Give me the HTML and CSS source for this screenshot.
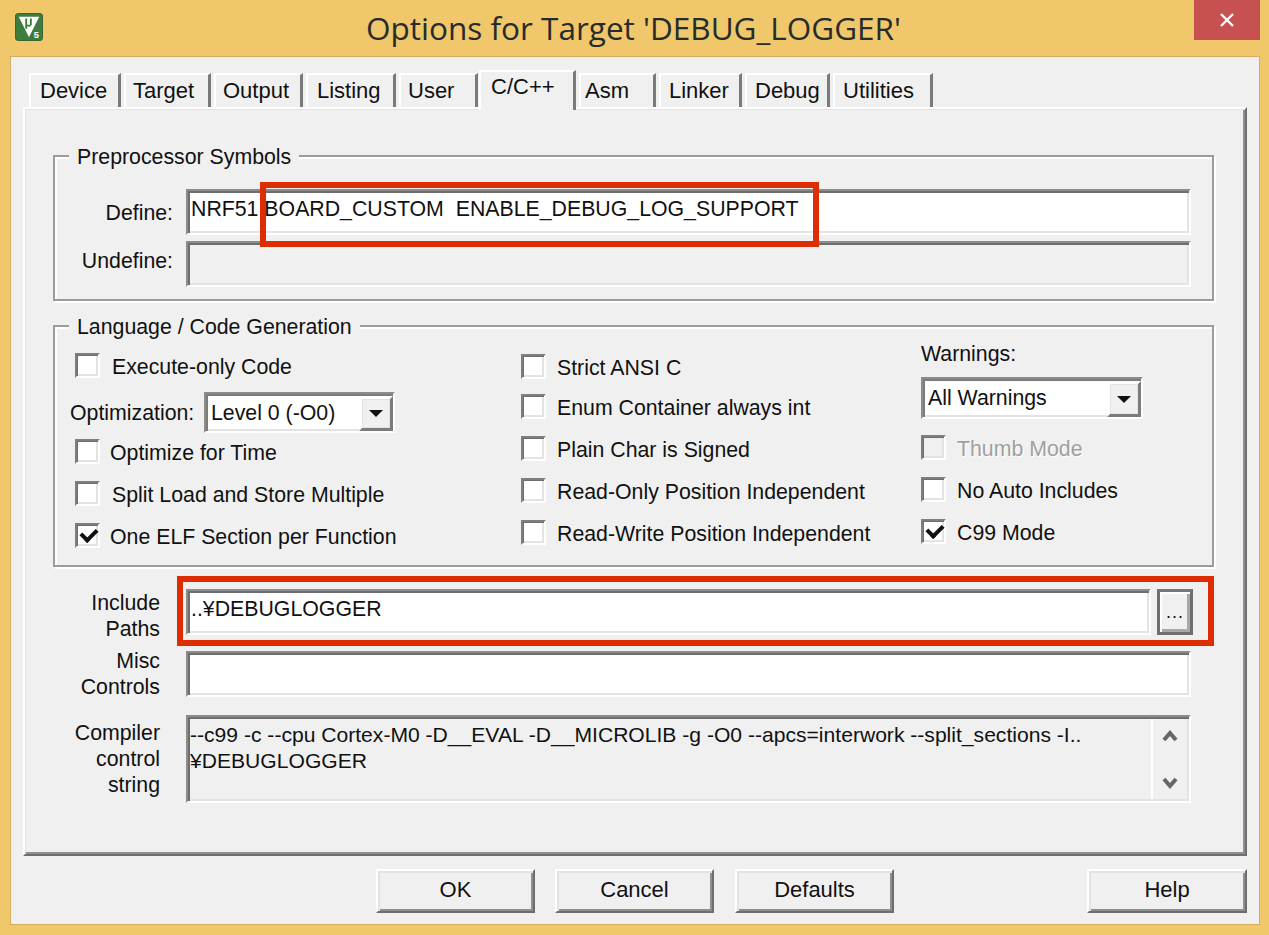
FILE: index.html
```html
<!DOCTYPE html>
<html lang="en">
<head>
    <meta charset="UTF-8">
    <title>Options for Target 'DEBUG_LOGGER'</title>
    <link rel="stylesheet" href="styles.css">
</head>
<body>

<div class="window">
    <div class="titlebar">
        <svg class="app-icon" width="28" height="28" viewBox="0 0 30 30">
            <rect x="0.5" y="0.5" width="29" height="29" rx="3" fill="#3c7d3e" stroke="#2c5f30"/>
            <polygon points="4,4 26,4 15,26" fill="#fff"/>
            <polygon points="20,17 29,17 29,28 14,28" fill="#3c7d3e"/>
            <text x="20" y="27" class="icon-five">5</text>
            <path d="M12 6 V17 M12 13.5 H17 M17 6 V13" stroke="#3c7d3e" stroke-width="2" fill="none"/>
        </svg>
        <div class="title">Options for Target 'DEBUG_LOGGER'</div>
        <div class="close">
            <svg width="14" height="14" viewBox="0 0 14 14">
                <path d="M1 1 L13 13 M13 1 L1 13" stroke="#fff" stroke-width="2.4"/>
            </svg>
        </div>
    </div>

    <div class="client">
        <div class="tabs">
            <div class="tab tab-device">Device</div>
            <div class="tab tab-target">Target</div>
            <div class="tab tab-output">Output</div>
            <div class="tab tab-listing">Listing</div>
            <div class="tab tab-user">User</div>
            <div class="tab tab-active">C/C++</div>
            <div class="tab tab-asm">Asm</div>
            <div class="tab tab-linker">Linker</div>
            <div class="tab tab-debug">Debug</div>
            <div class="tab tab-utilities">Utilities</div>
        </div>

        <div class="panel">
            <div class="group group-symbols">
                <div class="group-title">Preprocessor Symbols</div>
                <div class="symbol-row">
                    <label class="symbol-label">Define:</label>
                    <div class="field field-define">NRF51 BOARD_CUSTOM  ENABLE_DEBUG_LOG_SUPPORT</div>
                </div>
                <div class="symbol-row">
                    <label class="symbol-label symbol-label-high">Undefine:</label>
                    <div class="field field-define field-disabled"></div>
                </div>
                <div class="highlight highlight-define"></div>
            </div>

            <div class="group group-language">
                <div class="group-title">Language / Code Generation</div>
                <div class="language-grid">
                    <div class="col col-one">
                        <div class="check check-far"><span class="box"></span>Execute-only Code</div>
                        <div class="opt-row">
                            <span class="opt-label">Optimization:</span>
                            <div class="combo combo-opt">Level 0 (-O0)<span class="combo-btn"></span></div>
                        </div>
                        <div class="check check-first"><span class="box"></span>Optimize for Time</div>
                        <div class="check check-far"><span class="box"></span>Split Load and Store Multiple</div>
                        <div class="check"><span class="box box-checked"></span>One ELF Section per Function</div>
                    </div>
                    <div class="col col-two">
                        <div class="check"><span class="box"></span>Strict ANSI C</div>
                        <div class="check"><span class="box"></span>Enum Container always int</div>
                        <div class="check"><span class="box"></span>Plain Char is Signed</div>
                        <div class="check"><span class="box"></span>Read-Only Position Independent</div>
                        <div class="check"><span class="box"></span>Read-Write Position Independent</div>
                    </div>
                    <div class="col col-three">
                        <div class="warn-label">Warnings:</div>
                        <div class="combo combo-warn">All Warnings<span class="combo-btn"></span></div>
                        <div class="check check-off"><span class="box box-off"></span>Thumb Mode</div>
                        <div class="check"><span class="box"></span>No Auto Includes</div>
                        <div class="check"><span class="box box-checked"></span>C99 Mode</div>
                    </div>
                </div>
            </div>

            <div class="path-row path-include">
                <label class="path-label">Include<br>Paths</label>
                <div class="field field-include">..¥DEBUGLOGGER</div>
                <div class="browse">...</div>
                <div class="highlight highlight-include"></div>
            </div>
            <div class="path-row path-misc">
                <label class="path-label">Misc<br>Controls</label>
                <div class="field field-wide"></div>
            </div>
            <div class="path-row path-compiler">
                <label class="path-label">Compiler<br>control<br>string</label>
                <div class="field field-wide field-disabled field-compiler">
                    <div class="compiler-text">--c99 -c --cpu Cortex-M0 -D__EVAL -D__MICROLIB -g -O0 --apcs=interwork --split_sections -I..<br>¥DEBUGLOGGER</div>
                    <div class="scroll">
                        <svg width="16" height="13" viewBox="0 0 16 13"><path d="M2 11 L8 4 L14 11" stroke="#666" stroke-width="4" fill="none"/></svg>
                        <svg width="16" height="13" viewBox="0 0 16 13"><path d="M2 2 L8 9 L14 2" stroke="#666" stroke-width="4" fill="none"/></svg>
                    </div>
                </div>
            </div>
        </div>

        <div class="buttons">
            <div class="btn">OK</div>
            <div class="btn">Cancel</div>
            <div class="btn btn-defaults">Defaults</div>
            <div class="btn btn-help">Help</div>
        </div>
    </div>
</div>

</body>
</html>
```

FILE: styles.css
```css
* {
    box-sizing: border-box;
}

body {
    margin: 0;
    background-color: #f0c76a;
    font-family: "Liberation Sans", Arial, sans-serif;
    font-size: 21.3px;
    line-height: 26px;
    color: #111;
}

.window {
    width: 1269px;
    height: 935px;
    overflow: hidden;
}

/* title bar */
.titlebar {
    display: flex;
    height: 56px;
    padding-left: 15px;
}

.app-icon {
    flex: none;
    margin-top: 13px;
}

.icon-five {
    font-family: "Liberation Sans", sans-serif;
    font-size: 10px;
    font-weight: bold;
    fill: #fff;
}

.title {
    flex: none;
    width: 1151px;
    padding: 8px 0 0 30px;
    font-family: "Open Sans", sans-serif;
    font-size: 31.5px;
    line-height: 40px;
    color: #262c2c;
    text-align: center;
    white-space: nowrap;
}

.close {
    flex: none;
    display: flex;
    align-items: center;
    justify-content: center;
    width: 66px;
    height: 40px;
    background-color: #c75050;
}

/* client area */
.client {
    width: 1250px;
    height: 869px;
    margin-left: 10px;
    padding-top: 13px;
    background-color: #f0f0f0;
    border: 1px solid #d6ad5c;
}

.tabs {
    display: flex;
    align-items: flex-end;
    height: 37px;
    padding-left: 18px;
    font-size: 22px;
}

.tab {
    height: 34px;
    padding-top: 3px;
    margin-right: 3px;
    border-top: 2px solid #fff;
    border-left: 2px solid #fff;
    border-right: 3px solid #7a7a7a;
    white-space: nowrap;
}

.tab-device { width: 92px; padding-left: 9px; }
.tab-target { width: 87px; padding-left: 7px; }
.tab-output { width: 89px; padding-left: 7px; }
.tab-listing { width: 90px; padding-left: 9px; }
.tab-user { width: 79px; padding-left: 7px; margin-right: 1px; }
.tab-asm { width: 77px; padding-left: 4px; }
.tab-linker { width: 83px; padding-left: 8px; }
.tab-debug { width: 85px; padding-left: 8px; }
.tab-utilities { width: 100px; padding-left: 8px; margin-right: 0; }

.tab-active {
    position: relative;
    z-index: 1;
    width: 97px;
    height: 40px;
    margin-bottom: -3px;
    padding: 2px 0 0 10px;
    background-color: #f0f0f0;
}

/* tab page */
.panel {
    width: 1224px;
    height: 749px;
    margin-left: 12px;
    padding: 46px 0 0 28px;
    border-top: 2px solid #fff;
    border-left: 2px solid #fff;
    border-right: 2px solid #6e6e6e;
    border-bottom: 2px solid #6e6e6e;
    box-shadow: inset 1px 1px 0 #e3e3e3, inset -2px -2px 0 #8f8f8f;
}

.group {
    position: relative;
    width: 1161px;
    border: 2px solid #9c9c9c;
    box-shadow: 2px 2px 0 #fff, inset 2px 2px 0 #fff;
}

.group-symbols {
    height: 146px;
}

.group-language {
    height: 242px;
    margin-top: 24px;
}

.group-title {
    width: fit-content;
    margin: -13px 0 0 14px;
    padding: 0 8px;
    background-color: #f0f0f0;
}

/* edit boxes */
.field {
    padding: 5px 0 0 3px;
    background-color: #fff;
    border: 2px solid;
    border-color: #8c8c8c #fff #fff #8c8c8c;
    box-shadow: inset 2px 2px 0 #6e6e6e, inset -2px -2px 0 #e3e3e3;
    white-space: pre;
}

.field-disabled {
    background-color: #f0f0f0;
}

.field-define {
    width: 1005px;
    height: 46px;
}

.symbol-row {
    display: flex;
    gap: 13px;
    height: 52px;
}

.group-title + .symbol-row {
    margin-top: 19px;
}

.symbol-label {
    width: 118px;
    padding-top: 11px;
    text-align: right;
}

.symbol-label-high {
    padding-top: 7px;
}

/* language group */
.language-grid {
    display: grid;
    grid-template-columns: 466px 400px 1fr;
}

.col {
    display: flex;
    flex-direction: column;
}

.col-one {
    padding: 13px 0 0 20px;
}

.col-two {
    padding-top: 14px;
    gap: 17px;
}

.col-two .check {
    gap: 11px;
}

.col-two .check:first-child {
    margin-bottom: -2px;
}

.col-three {
    gap: 17px;
}

.check {
    display: flex;
    align-items: flex-start;
    gap: 10px;
    height: 25px;
    line-height: 28px;
    white-space: nowrap;
}

.check-far {
    gap: 12px;
}

.check-first {
    margin-top: 6px;
}

.col-one .check-far + .check,
.col-one .check-first + .check {
    margin-top: 17px;
}

.col-three .check {
    gap: 11px;
}

.check-off {
    color: #a0a0a0;
    text-shadow: 1px 1px 0 #fff;
}

.box {
    position: relative;
    flex: none;
    width: 25px;
    height: 25px;
    background-color: #fff;
    border: 2px solid;
    border-color: #7e7e7e #fff #fff #7e7e7e;
    box-shadow: inset 1px 1px 0 #6e6e6e, inset -2px -2px 0 #e3e3e3;
}

.box-off {
    background-color: #f0f0f0;
}

.box-checked::after {
    content: "";
    position: absolute;
    left: 4px;
    top: 3px;
    width: 12px;
    height: 7px;
    border-left: 4px solid #111;
    border-bottom: 4px solid #111;
    transform: rotate(-45deg);
}

.opt-row {
    display: flex;
    align-items: center;
    margin: 14px 0 0 -5px;
}

.opt-label {
    width: 134px;
}

.combo {
    display: flex;
    justify-content: space-between;
    align-items: center;
    background-color: #fff;
    padding-left: 5px;
    border: 2px solid;
    border-color: #8c8c8c #fff #fff #8c8c8c;
    box-shadow: inset 2px 2px 0 #7c7c7c, inset -2px -2px 0 #e3e3e3;
}

.combo-opt {
    width: 191px;
    height: 41px;
}

.combo-warn {
    width: 222px;
    height: 42px;
    margin-bottom: -1px;
}

.combo-btn {
    display: flex;
    align-items: center;
    justify-content: center;
    align-self: stretch;
    width: 34px;
    margin-top: 2px;
    background-color: #f0f0f0;
    border: 3px solid;
    border-color: #fff #7c7c7c #7c7c7c #fff;
    box-shadow: inset 1px 1px 0 #e3e3e3, inset -1px -1px 0 #e3e3e3;
}

.combo-btn::after {
    content: "";
    border-top: 7px solid #111;
    border-left: 7px solid transparent;
    border-right: 7px solid transparent;
}

.warn-label {
    margin-bottom: -7px;
    padding-top: 1px;
}

/* paths and controls */
.path-row {
    position: relative;
    display: flex;
    width: 1161px;
    height: 46px;
}

.path-include {
    margin-top: 22px;
}

.path-misc {
    margin-top: 16px;
}

.path-compiler {
    height: 88px;
    margin-top: 18px;
}

.path-label {
    width: 107px;
    margin-right: 26px;
    padding-top: 1px;
    text-align: right;
}

.path-misc .path-label {
    padding-top: 0;
    margin-top: -3px;
}

.path-compiler .path-label {
    padding-top: 5px;
}

.field-include {
    width: 965px;
    height: 46px;
}

.field-wide {
    width: 1005px;
    height: 46px;
}

.field-compiler {
    display: flex;
    justify-content: space-between;
    height: 88px;
    padding: 5px 2px 2px 2px;
}

.compiler-text {
    font-size: 21.1px;
    white-space: nowrap;
}

.scroll {
    display: flex;
    flex-direction: column;
    align-items: center;
    justify-content: space-between;
    width: 36px;
    padding: 10px 0 9px;
    margin-top: -3px;
    border-left: 2px solid #fff;
}

.browse {
    width: 36px;
    height: 46px;
    margin-left: 6px;
    padding-top: 7px;
    font-size: 18px;
    letter-spacing: 1px;
    text-align: center;
    background-color: #f0f0f0;
    border: 3px solid #6e6e6e;
    border-top-color: #777;
    box-shadow: inset 2px 2px 0 #fff, inset -3px -3px 0 #a8a8a8;
}

/* red marks drawn over the screenshot */
.highlight {
    position: absolute;
    border: 6px solid #de2c03;
}

.highlight-define {
    left: 205px;
    top: 25px;
    width: 559px;
    height: 65px;
}

.highlight-include {
    left: 124px;
    top: -13px;
    width: 1037px;
    height: 70px;
}

/* bottom buttons */
.buttons {
    display: flex;
    gap: 20px;
    margin-top: 13px;
    padding-left: 365px;
    font-size: 22px;
}

.btn {
    width: 159px;
    height: 44px;
    padding-top: 6px;
    text-align: center;
    background-color: #f0f0f0;
    border: 2px solid;
    border-color: #fff #6e6e6e #6e6e6e #fff;
    box-shadow: inset 2px 2px 0 #e3e3e3, inset -2px -2px 0 #8f8f8f;
}

.btn-defaults {
    margin-left: 1px;
}

.btn-help {
    width: 160px;
    margin-left: 173px;
}
```
